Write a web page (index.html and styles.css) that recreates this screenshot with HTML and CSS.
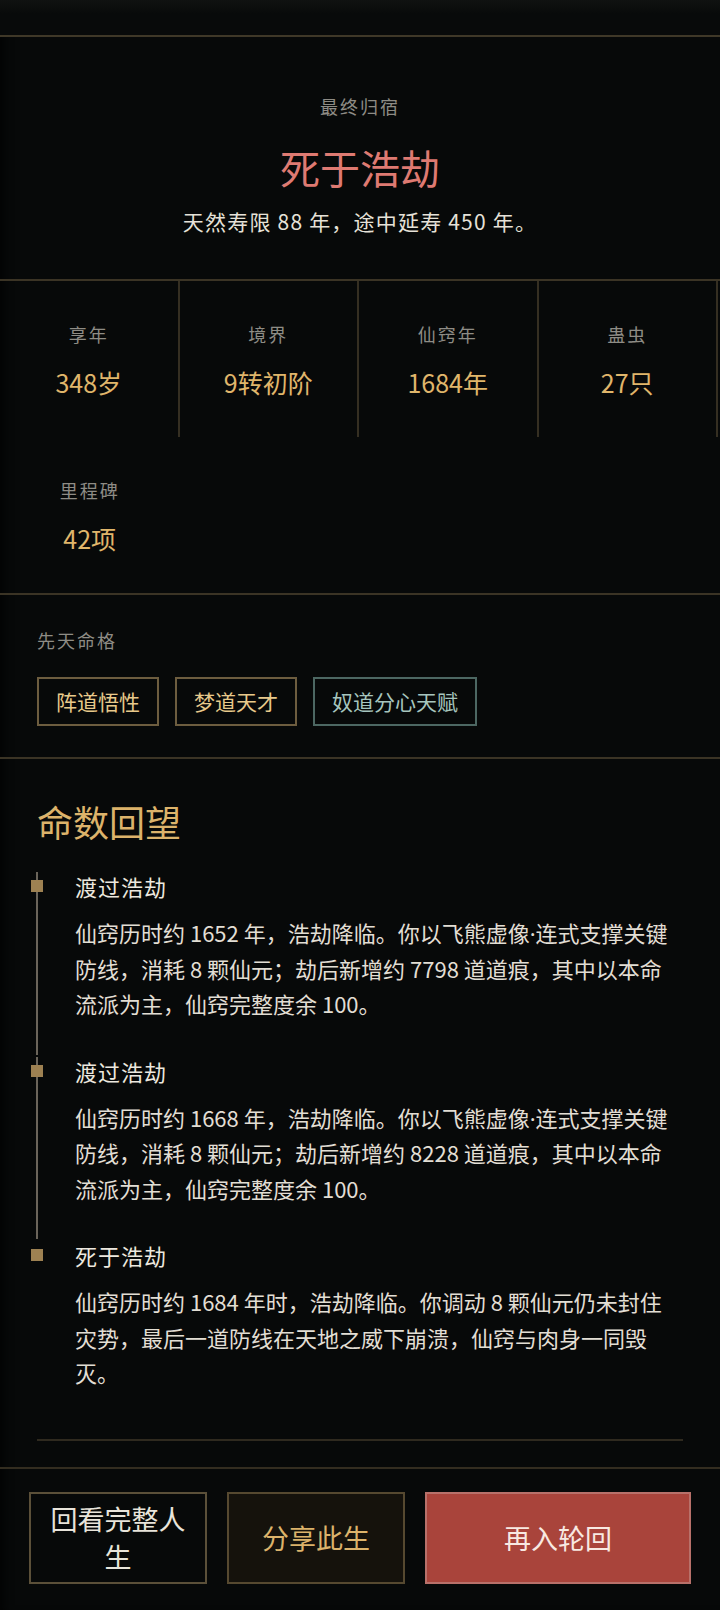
FILE: index.html
```html
<!DOCTYPE html>
<html lang="zh-CN">
<head>
    <meta charset="UTF-8">
    <meta name="viewport" content="width=device-width, initial-scale=1.0">
    <title>命数回望</title>
    <link rel="stylesheet" href="styles.css">
</head>
<body>

    <div class="page">
        <div class="topbar"></div>

        <section class="hero">
            <div class="label">最终归宿</div>
            <h1 class="fate">死于浩劫</h1>
            <p class="fate-desc">天然寿限 88 年，途中延寿 450 年。</p>
        </section>

        <section class="stats">
            <div class="stat">
                <div class="label">享年</div>
                <div class="stat-value">348岁</div>
            </div>
            <div class="stat">
                <div class="label">境界</div>
                <div class="stat-value">9转初阶</div>
            </div>
            <div class="stat">
                <div class="label">仙窍年</div>
                <div class="stat-value">1684年</div>
            </div>
            <div class="stat">
                <div class="label">蛊虫</div>
                <div class="stat-value">27只</div>
            </div>
            <div class="stat">
                <div class="label">里程碑</div>
                <div class="stat-value">42项</div>
            </div>
        </section>

        <section class="traits">
            <div class="label">先天命格</div>
            <div class="tags">
                <span class="tag">阵道悟性</span>
                <span class="tag">梦道天才</span>
                <span class="tag tag-rare">奴道分心天赋</span>
            </div>
        </section>

        <section class="review">
            <h2 class="review-title">命数回望</h2>

            <div class="timeline">
                <div class="event">
                    <div class="event-title">渡过浩劫</div>
                    <p class="event-text">仙窍历时约 1652 年，浩劫降临。你以飞熊虚像<span class="dot">·</span>连式支撑关键防线，消耗 8 颗仙元；劫后新增约 7798 道道痕，其中以本命流派为主，仙窍完整度余 100。</p>
                </div>
                <div class="event">
                    <div class="event-title">渡过浩劫</div>
                    <p class="event-text">仙窍历时约 1668 年，浩劫降临。你以飞熊虚像<span class="dot">·</span>连式支撑关键防线，消耗 8 颗仙元；劫后新增约 8228 道道痕，其中以本命流派为主，仙窍完整度余 100。</p>
                </div>
                <div class="event">
                    <div class="event-title">死于浩劫</div>
                    <p class="event-text">仙窍历时约 1684 年时，浩劫降临。你调动 8 颗仙元仍未封住灾势，最后一道防线在天地之威下崩溃，仙窍与肉身一同毁灭。</p>
                </div>
            </div>

            <div class="review-end"></div>
        </section>

        <footer class="actions">
            <button class="btn btn-ghost">回看完整人生</button>
            <button class="btn btn-share">分享此生</button>
            <button class="btn btn-main">再入轮回</button>
        </footer>
    </div>

</body>
</html>
```

FILE: styles.css
```css
/* General Styles */
body {
    margin: 0;
    background: #070909;
    color: #e6e2d8;
    font-family: "Noto Sans CJK SC", "Noto Sans", sans-serif;
}

.page {
    width: 720px;
    height: 1610px;
    box-shadow: inset 10px 0 10px -6px rgba(0, 0, 0, 0.7);
    overflow: hidden;
}

.topbar {
    height: 35px;
    background: linear-gradient(#101211, #080a0a 40%);
    border-bottom: 2px solid #3f3828;
}

.label {
    font-size: 18px;
    line-height: 26px;
    letter-spacing: 2px;
    color: #8e8c85;
}

/* Hero */
.hero {
    padding: 56px 20px 43px;
    text-align: center;
    border-bottom: 2px solid #3b3425;
}

.fate {
    margin: 22px 0 0;
    font-size: 40px;
    line-height: 52px;
    font-weight: 400;
    color: #de7a72;
}

.fate-desc {
    margin: 13px 0 0;
    font-size: 21px;
    line-height: 30px;
    letter-spacing: 1.2px;
    color: #e6e2d8;
}

/* Stats */
.stats {
    display: grid;
    grid-template-columns: repeat(4, 179.5px);
    border-bottom: 2px solid #3b3425;
}

.stat {
    height: 156px;
    padding-top: 40px;
    box-sizing: border-box;
    text-align: center;
}

.stat:nth-child(-n+4) {
    border-right: 2px solid #352f22;
}

.stat-value {
    margin-top: 18px;
    font-size: 25px;
    line-height: 34px;
    color: #e0b66b;
}

/* Traits */
.traits {
    padding: 32px 37px 31px;
    border-bottom: 2px solid #3b3425;
}

.tags {
    display: flex;
    gap: 16px;
    margin-top: 24px;
}

.tag {
    padding: 8px 17px;
    font-size: 21px;
    line-height: 29px;
    color: #e8c98b;
    border: 2px solid #6d5d3f;
}

.tag-rare {
    color: #a6c5be;
    border-color: #4c6762;
}

/* Review */
.review {
    padding: 38px 37px 0;
}

.review-title {
    margin: 0 0 25px;
    font-size: 36px;
    line-height: 48px;
    font-weight: 400;
    color: #dcb36b;
}

.event {
    position: relative;
    padding: 0 0 33px 38px;
}

.event::before {
    content: "";
    position: absolute;
    left: -1px;
    top: 2px;
    bottom: 0;
    width: 2px;
    background: #6a645a;
}

.event:last-child::before {
    display: none;
}

.event::after {
    content: "";
    position: absolute;
    left: -6px;
    top: 10px;
    width: 12px;
    height: 12px;
    background: #9d8152;
}

.event-title {
    font-size: 22px;
    line-height: 32px;
    letter-spacing: 1px;
    color: #ece8df;
}

.event-text {
    margin: 13px 0 0;
    font-size: 22px;
    line-height: 35.5px;
    color: #e2ded4;
}

.dot {
    font-family: "Noto Sans", sans-serif;
    line-height: 1;
}

.review-end {
    margin-top: 15px;
    height: 2px;
    background: #2f2a1f;
}

/* Actions */
.actions {
    display: flex;
    gap: 20px;
    margin-top: 26px;
    padding: 23px 29px;
    border-top: 2px solid #332d20;
}

.btn {
    flex: 0 0 178px;
    box-sizing: border-box;
    height: 92px;
    padding: 0 14px;
    font-family: inherit;
    font-size: 27px;
    line-height: 38px;
    cursor: pointer;
    border: 2px solid #5b5039;
    background: transparent;
    color: #e8e4da;
}

.btn-share {
    background: #15120c;
    border-color: #564930;
    color: #dcb36b;
}

.btn-main {
    flex: 1 1 auto;
    background: #a9443b;
    border-color: #b8716a;
    color: #f8e9e2;
}
```
